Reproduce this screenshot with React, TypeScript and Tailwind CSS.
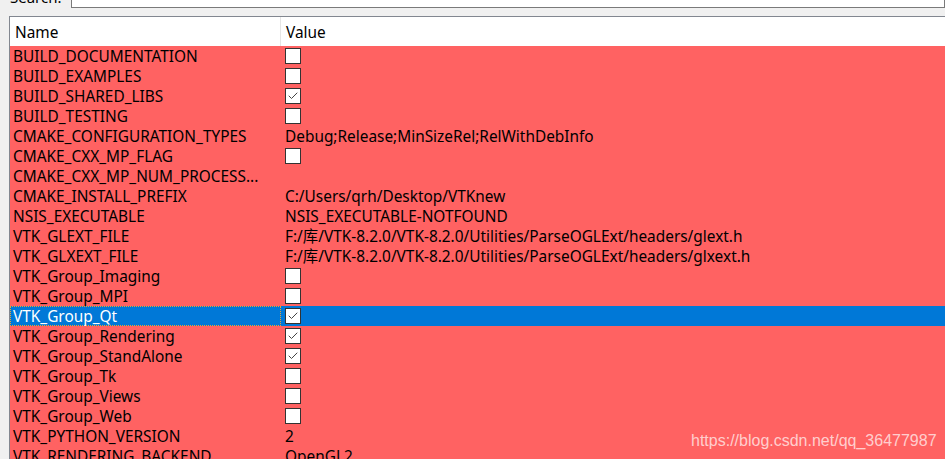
import { Check } from "lucide-react"

type Row = { name: string; value?: string; check?: boolean }

const rows: Row[] = [
  { name: "BUILD_DOCUMENTATION", check: false },
  { name: "BUILD_EXAMPLES", check: false },
  { name: "BUILD_SHARED_LIBS", check: true },
  { name: "BUILD_TESTING", check: false },
  { name: "CMAKE_CONFIGURATION_TYPES", value: "Debug;Release;MinSizeRel;RelWithDebInfo" },
  { name: "CMAKE_CXX_MP_FLAG", check: false },
  { name: "CMAKE_CXX_MP_NUM_PROCESS...", value: "" },
  { name: "CMAKE_INSTALL_PREFIX", value: "C:/Users/qrh/Desktop/VTKnew" },
  { name: "NSIS_EXECUTABLE", value: "NSIS_EXECUTABLE-NOTFOUND" },
  { name: "VTK_GLEXT_FILE", value: "F:/库/VTK-8.2.0/VTK-8.2.0/Utilities/ParseOGLExt/headers/glext.h" },
  { name: "VTK_GLXEXT_FILE", value: "F:/库/VTK-8.2.0/VTK-8.2.0/Utilities/ParseOGLExt/headers/glxext.h" },
  { name: "VTK_Group_Imaging", check: false },
  { name: "VTK_Group_MPI", check: false },
  { name: "VTK_Group_Qt", check: true },
  { name: "VTK_Group_Rendering", check: true },
  { name: "VTK_Group_StandAlone", check: true },
  { name: "VTK_Group_Tk", check: false },
  { name: "VTK_Group_Views", check: false },
  { name: "VTK_Group_Web", check: false },
  { name: "VTK_PYTHON_VERSION", value: "2" },
  { name: "VTK_RENDERING_BACKEND", value: "OpenGL2" },
]

const SELECTED = 13

function Box({ checked }: { checked: boolean }) {
  return (
    <div className="w-4 h-4 bg-white border border-[#333] flex items-center justify-center">
      {checked && <Check size={12} strokeWidth={2} className="text-[#444]" />}
    </div>
  )
}

export default function App() {
  return (
    <div
      className="relative w-[945px] h-[459px] overflow-hidden bg-[#f0f0f0] text-[15.4px] text-black"
      style={{ fontFamily: '"Noto Sans", "Noto Sans CJK SC", sans-serif' }}
    >
      {/* search bar, cut off at the top */}
      <div className="h-4 overflow-hidden">
        <div className="flex items-start h-[19px] -mt-[11px]">
          <span className="pl-[10px] w-[71px] leading-[16px] text-[15px]">Search:</span>
          <div className="flex-1 h-full bg-white border border-[#7a7a7a]" />
        </div>
      </div>

      {/* cache table */}
      <div className="ml-[9px] border-l border-t border-[#828790] bg-white">
        <div className="flex h-[29px] items-center bg-white">
          <div className="w-[271px] h-full pl-[5px] pt-[2px] flex items-center border-r border-[#e5e5e5]">Name</div>
          <div className="pl-[5px] pt-[2px]">Value</div>
        </div>
        {rows.map((r, i) => {
          const sel = i === SELECTED
          return (
            <div
              key={r.name}
              className={`flex h-5 items-center whitespace-nowrap ${sel ? "bg-[#0078d7] text-white" : "bg-[#ff6262]"}`}
            >
              <div
                className={`w-[271px] h-full pt-[2px] flex items-center ${sel ? "border border-dotted border-[#f0a030] pl-[2px]" : "pl-[3px]"}`}
              >
                {r.name}
              </div>
              <div className="pl-[4px] text-black">
                {r.check !== undefined ? <Box checked={r.check} /> : <span className="block pt-[2px]">{r.value}</span>}
              </div>
            </div>
          )
        })}
      </div>

      <div
        className="absolute left-[691px] top-[429px] text-[16px] text-white/70"
        style={{ fontFamily: '"Liberation Sans", sans-serif' }}
      >
        https://blog.csdn.net/qq_36477987
      </div>
    </div>
  )
}
